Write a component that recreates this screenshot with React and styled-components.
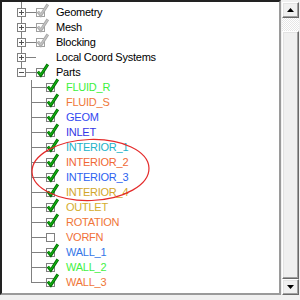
import React from 'react';
import styled, { createGlobalStyle } from 'styled-components';

const GlobalStyle = createGlobalStyle`
  html, body {
    margin: 0;
    padding: 0;
    background: #f0f0f0;
  }
  body {
    width: 300px;
    height: 300px;
    overflow: hidden;
  }
`;

const Window = styled.div`
  display: flex;
  width: 300px;
  height: 295px;
  font-family: "Liberation Sans", Arial, sans-serif;
`;

const Frame = styled.div`
  position: relative;
  flex: 0 0 281px;
  box-sizing: border-box;
  background: #fff;
  border-style: solid;
  border-width: 2px;
  border-color: #222 #9a9a9a #9a9a9a #222;
  overflow: hidden;
`;

const Tree = styled.ul`
  list-style: none;
  margin: 0;
  padding: 3px 0 0;
`;

const Row = styled.li`
  display: flex;
  align-items: center;
  height: 15px;
  white-space: nowrap;
`;

const Branch = styled.span`
  position: relative;
  flex: 0 0 ${p => p.$width}px;
  align-self: stretch;

  &::before {
    content: '';
    position: absolute;
    left: ${p => p.$line}px;
    top: ${p => (p.$first ? -3 : 0)}px;
    bottom: ${p => (p.$last ? 7 : 0)}px;
    width: 1px;
    background: #808080;
  }

  &::after {
    content: '';
    position: absolute;
    left: ${p => p.$line}px;
    right: 0;
    top: 7px;
    height: 1px;
    background: #808080;
  }
`;

const Expander = styled.span`
  position: absolute;
  left: ${p => p.$line - 4}px;
  top: 3px;
  width: 9px;
  height: 9px;
  box-sizing: border-box;
  border: 1px solid #808080;
  background: #fff;
  z-index: 1;

  &::before {
    content: '';
    position: absolute;
    left: 1px;
    right: 1px;
    top: 3px;
    height: 1px;
    background: #505050;
  }

  &::after {
    content: '';
    display: ${p => (p.$open ? 'none' : 'block')};
    position: absolute;
    left: 3px;
    top: 1px;
    bottom: 1px;
    width: 1px;
    background: #505050;
  }
`;

const IconSlot = styled.span`
  flex: 0 0 15px;
  height: 15px;
  display: block;

  svg {
    display: block;
    overflow: visible;
  }
`;

const Label = styled.span`
  padding-left: 5px;
  font-size: 11px;
  letter-spacing: -0.25px;
  line-height: 15px;
  color: ${p => p.$color || '#000'};
`;

const Ring = styled.svg`
  position: absolute;
  left: -2px;
  top: -2px;
  width: 281px;
  height: 295px;
  pointer-events: none;
  z-index: 2;
`;

const Scrollbar = styled.div`
  display: flex;
  flex-direction: column;
  width: 17px;
  margin-left: 1px;
  padding-top: 2px;
`;

const Raised = styled.div`
  box-sizing: border-box;
  background: #f0f0f0;
  border-style: solid;
  border-width: 1px;
  border-color: #fff #696969 #696969 #fff;
  box-shadow: inset -1px -1px 0 #a0a0a0, inset 1px 1px 0 #e3e3e3;
`;

const ArrowButton = styled(Raised)`
  flex: 0 0 16px;
  display: flex;
  align-items: center;
  justify-content: center;
`;

const Track = styled.div`
  flex: 0 0 13px;
  background: repeating-conic-gradient(#ffffff 0 25%, #e6e6e6 0 50%) 0 0 / 2px 2px;
`;

const Thumb = styled(Raised)`
  flex: 1;
`;

const Arrow = ({ down }) => (
  <svg width="7" height="4" viewBox="0 0 7 4">
    <polygon points={down ? '0,0 7,0 3.5,4' : '3.5,0 7,4 0,4'} fill="#000" />
  </svg>
);

const CheckBox = ({ state }) => {
  const gray = state === 'gray';
  return (
    <svg width="15" height="15" viewBox="0 0 15 15">
      <rect x="0.5" y="3.5" width="8" height="8" fill="#fff" stroke={gray ? '#a0a0a0' : '#808080'} />
      {state !== 'off' && (
        <>
          <path d="M1.8 6.6 L4.8 10.2 L11.8 -0.6" fill="none" stroke={gray ? '#a8a8a8' : '#006e00'} strokeWidth="3" />
          <path d="M2.2 6.9 L4.8 9.8 L11.6 -0.2" fill="none" stroke={gray ? '#c4c4c4' : '#12b012'} strokeWidth="1.3" />
        </>
      )}
    </svg>
  );
};

const rows = [
  { label: 'Geometry', level: 0, expander: 'plus', check: 'gray', first: true },
  { label: 'Mesh', level: 0, expander: 'plus', check: 'gray' },
  { label: 'Blocking', level: 0, expander: 'plus', check: 'gray' },
  { label: 'Local Coord Systems', level: 0, expander: 'plus' },
  { label: 'Parts', level: 0, expander: 'minus', check: 'on', last: true },
  { label: 'FLUID_R', level: 1, check: 'on', color: '#3cf03c' },
  { label: 'FLUID_S', level: 1, check: 'on', color: '#ef7838' },
  { label: 'GEOM', level: 1, check: 'on', color: '#3248f0' },
  { label: 'INLET', level: 1, check: 'on', color: '#3636e6' },
  { label: 'INTERIOR_1', level: 1, check: 'on', color: '#22b2c8' },
  { label: 'INTERIOR_2', level: 1, check: 'on', color: '#f06834' },
  { label: 'INTERIOR_3', level: 1, check: 'on', color: '#2c62f0' },
  { label: 'INTERIOR_4', level: 1, check: 'on', color: '#d2a62a' },
  { label: 'OUTLET', level: 1, check: 'on', color: '#d4ae2e' },
  { label: 'ROTATION', level: 1, check: 'on', color: '#f07638' },
  { label: 'VORFN', level: 1, check: 'off', color: '#f07038' },
  { label: 'WALL_1', level: 1, check: 'on', color: '#3476e8' },
  { label: 'WALL_2', level: 1, check: 'on', color: '#44f044' },
  { label: 'WALL_3', level: 1, check: 'on', color: '#f07638', last: true },
];

const App = () => (
  <>
    <GlobalStyle />
    <Window>
      <Frame>
        <Tree>
          {rows.map(r => {
            const line = r.level === 0 ? 19 : 29;
            return (
              <Row key={r.label}>
                <Branch $width={r.level === 0 ? 34 : 44} $line={line} $first={r.first} $last={r.last}>
                  {r.expander && <Expander $line={line} $open={r.expander === 'minus'} />}
                </Branch>
                <IconSlot>{r.check && <CheckBox state={r.check} />}</IconSlot>
                <Label $color={r.color}>{r.label}</Label>
              </Row>
            );
          })}
        </Tree>
        <Ring viewBox="0 0 281 295">
          <ellipse cx="90.5" cy="170" rx="58.5" ry="30.5" fill="none" stroke="#e42a2a" strokeWidth="1.2" transform="rotate(-2 90.5 170)" />
        </Ring>
      </Frame>
      <Scrollbar>
        <ArrowButton><Arrow /></ArrowButton>
        <Track />
        <Thumb />
        <ArrowButton><Arrow down /></ArrowButton>
      </Scrollbar>
    </Window>
  </>
);

export default App;
